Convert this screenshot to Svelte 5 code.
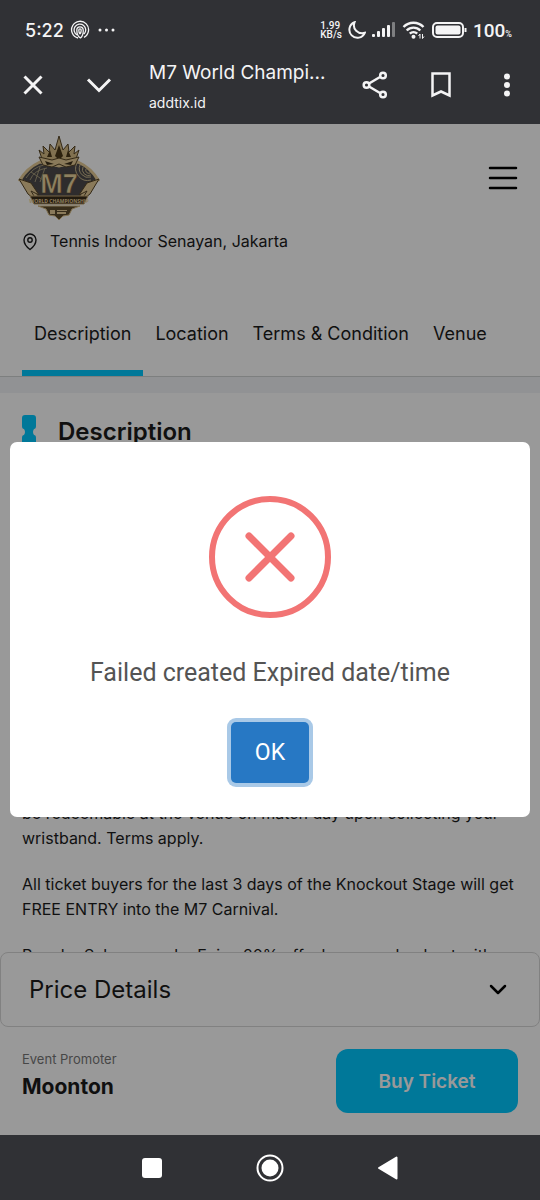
<script>
    let modalOpen = true;
    let activeTab = 'Description';

    const tabs = ['Description', 'Location', 'Terms & Condition', 'Venue'];
    const signalBars = [3, 6, 9, 12, 15];
</script>

<div class="screen">
    <header class="chrome">
        <div class="status">
            <span class="clock">5:22</span>
            <svg class="print" width="20" height="20" viewBox="0 0 20 20">
                <path d="M8 18A8.500 8.500 0 1 1 14 17.300M7.200 15A5.800 5.800 0 1 1 14 14M10.500 18c2-1.500 2.900-4.500 2.700-8a3.200 3.200 0 0 0-6.400 0c0 4 1 6.500 3.700 8M10 14c1-1.200 1.200-2 1.200-4a1.200 1.200 0 0 0-2.400 0c0 2 .2 2.800 1.200 4" />
            </svg>
            <svg class="solid" width="17" height="4" viewBox="0 0 17 4">
                <circle cx="2" cy="2" r="1.500" /><circle cx="8.500" cy="2" r="1.500" /><circle cx="15" cy="2" r="1.500" />
            </svg>
            <div class="status-right">
                <span class="speed">1.99<br>KB/s</span>
                <svg class="moon" width="18" height="18" viewBox="0 0 18 18">
                    <path d="M6.500 1.300A8 8 0 1 0 16.800 11.800C10 13.500 4 8 6.500 1.300z" />
                </svg>
                <svg class="solid" width="24" height="16" viewBox="0 0 24 16">
                    {#each signalBars as h, i}
                        <rect x={i * 5} y={15 - h} width="3" height={h} rx="1" opacity={i === 4 ? 0.4 : 1} />
                    {/each}
                </svg>
                <svg class="wifi" width="24" height="18" viewBox="0 0 24 18">
                    <path d="M1.500 6a14 14 0 0 1 20 0M4.700 9.500a9.500 9.500 0 0 1 13.600 0M7.800 12.700a5.300 5.300 0 0 1 7.400 0" />
                    <circle cx="11.500" cy="15.800" r="2" />
                    <path class="thin" d="M18 17.500v-4.500l-1.500 2M20.500 13v4.500l1.500-2" />
                </svg>
                <svg class="battery" width="35" height="16" viewBox="0 0 35 16">
                    <rect x="1" y="1" width="30" height="14" rx="4" />
                    <rect class="fill" x="3.500" y="3.500" width="25" height="9" rx="2" />
                    <path d="M33.500 6v4" />
                </svg>
                <span class="level">100<small>%</small></span>
            </div>
        </div>

        <div class="toolbar">
            <button class="icon" aria-label="Close">
                <svg width="24" height="24" viewBox="0 0 24 24"><path d="M3.500 3.500l17 17M20.500 3.500l-17 17" /></svg>
            </button>
            <button class="icon down" aria-label="Minimize">
                <svg width="26" height="24" viewBox="0 0 26 24"><path d="M2 6.500l11 11 11-11" /></svg>
            </button>
            <div class="site">
                <div class="site-title">M7 World Champi...</div>
                <div class="site-host">addtix.id</div>
            </div>
            <button class="icon share" aria-label="Share">
                <svg width="26" height="28" viewBox="0 0 26 28">
                    <path d="M7 12.500L18 6M7 15.500L18 22" />
                    <circle cx="4.500" cy="14" r="2.800" /><circle cx="21" cy="4.500" r="2.800" /><circle cx="21" cy="23.500" r="2.800" />
                </svg>
            </button>
            <button class="icon bookmark" aria-label="Bookmark">
                <svg width="22" height="26" viewBox="0 0 22 26"><path d="M2.500 1.500h17v22l-8.500-4-8.500 4z" /></svg>
            </button>
            <button class="icon more" aria-label="More options">
                <svg width="6" height="24" viewBox="0 0 6 24"><circle cx="3" cy="3.500" r="3" /><circle cx="3" cy="12" r="3" /><circle cx="3" cy="20.500" r="3" /></svg>
            </button>
        </div>
    </header>

    <main class="page">
        <div class="brand">
            <svg class="logo" width="82" height="86" viewBox="0 0 82 86">
                <path fill="#d8bd85" stroke="#574526" d="M24 24l-3-9 5 4-1-8 6 6 1-8 5 6 4-14 4 14 5-6 1 8 6-6-1 8 5-4-3 9-17 6z" />
                <path fill="#4a3818" d="M29 22l3-7 2 7zM37 21l4-11 4 11-4 4zM48 22l2-7 3 7z" />
                <path fill="#4d4a4b" stroke="#e6cc96" stroke-width="3" d="M22 27Q9 33 2 45l10 5 9 17h40l9-17 10-5Q73 33 60 27l-19 4z" />
                <path fill="none" stroke="#a59a7c" d="M8 43q7-11 18-13M12 45q4-10 17-12M17 47l5-15M22 47l5-14M13 37l12 8" />
                <path fill="none" stroke="#c9b88c" d="M59 28a12 12 0 0 0 14 17M62 30a9 9 0 0 0 11 12M65 32a6 6 0 0 0 8 8M68 34a3 3 0 0 0 4 4" />
                <path fill="#e6cc96" stroke="#574526" d="M21 22l13 3 7-2 7 2 13-3-4 8-9 2-7-3-7 3-9-2z" />
                <path fill="#3d3019" d="M27 26l9 3-7 1zM55 26l-9 3 7 1z" />
                <path fill="#e6cc96" stroke="#574526" d="M1 44l12 4 8 12-8-4 6 10-9-7zM81 44l-12 4-8 12 8-4-6 10 9-7z" />
                <text class="logo-mark" x="41" y="58" text-anchor="middle">M7</text>
                <path fill="#3a2d1a" stroke="#c3a872" d="M12 61h58l-4 8H16z" />
                <text class="logo-name" x="41" y="68" text-anchor="middle">WORLD CHAMPIONSHIP</text>
                <path fill="#5d4b2d" stroke="#d8bd85" d="M20 71h42l-8 3-3 6-6 1-4 4-4-4-6-1-3-6z" />
                <path fill="#e6cc96" d="M32 75h5v4h-5zM39 75h10v1H39zM39 77h9v2h-9z" />
            </svg>
            <button class="menu" aria-label="Menu">
                <svg width="30" height="24" viewBox="0 0 30 24"><path d="M2 2h26M2 12h26M2 22h26" /></svg>
            </button>
        </div>

        <div class="venue">
            <svg width="16" height="18" viewBox="0 0 16 18">
                <path d="M8 16.500S14 12 14 7A6 6 0 0 0 2 7c0 5 6 9.500 6 9.500z" /><circle cx="8" cy="7" r="2.200" />
            </svg>
            <span>Tennis Indoor Senayan, Jakarta</span>
        </div>

        <nav class="tabs">
            {#each tabs as tab}
                <button class="tab" class:active={activeTab === tab} on:click={() => activeTab = tab}>{tab}</button>
            {/each}
        </nav>

        <section class="details">
            <h2>
                <svg width="14" height="34" viewBox="0 0 14 34">
                    <path d="M3 0h8q3 0 3 3v8q0 3-2 3-2 3 0 6 2 0 2 3v8q0 3-3 3H3q-3 0-3-3v-8q0-3 2-3 2-3 0-6-2 0-2-3V3q0-3 3-3z" />
                </svg>
                Description
            </h2>
            <div class="copy">
                <p>be redeemable at the venue on match day upon collecting your wristband. Terms apply.</p>
                <p>All ticket buyers for the last 3 days of the Knockout Stage will get FREE ENTRY into the M7 Carnival.</p>
                <p>Regular Sale promo by Enjoy 20% off when you checkout with</p>
            </div>
        </section>

        <footer class="sheet">
            <button class="price">
                Price Details
                <svg width="18" height="12" viewBox="0 0 18 12"><path d="M2 2l7 7 7-7" /></svg>
            </button>
            <div class="buy-row">
                <div>
                    <div class="label">Event Promoter</div>
                    <div class="promoter">Moonton</div>
                </div>
                <button class="buy">Buy Ticket</button>
            </div>
        </footer>

        {#if modalOpen}
            <div class="backdrop">
                <div class="modal" role="alertdialog" aria-labelledby="modal-text">
                    <svg width="122" height="122" viewBox="0 0 122 122">
                        <circle cx="61" cy="61" r="58" /><path class="cross" d="M40 40l42 42M82 40l-42 42" />
                    </svg>
                    <p id="modal-text">Failed created Expired date/time</p>
                    <button class="ok" on:click={() => modalOpen = false}>OK</button>
                </div>
            </div>
        {/if}
    </main>

    <nav class="system-nav">
        <button aria-label="Recents"><svg width="22" height="22" viewBox="0 0 22 22"><rect x="1" y="1" width="20" height="20" rx="3" /></svg></button>
        <button aria-label="Home"><svg width="28" height="28" viewBox="0 0 28 28"><circle class="ring" cx="14" cy="14" r="12.500" /><circle cx="14" cy="14" r="8.500" /></svg></button>
        <button aria-label="Back"><svg width="22" height="24" viewBox="0 0 22 24"><path d="M19.500 1.500v21L2 12z" stroke="#fff" stroke-width="2" stroke-linejoin="round" /></svg></button>
    </nav>
</div>

<style>
    :global(body) {
        margin: 0;
    }

    .screen {
        display: flex;
        flex-direction: column;
        height: 100vh;
        font-family: Inter, "Liberation Sans", sans-serif;
        color: #1c1c1c;
        background: #303135;
    }

    button {
        margin: 0;
        padding: 0;
        border: none;
        background: none;
        font-family: inherit;
        color: inherit;
        cursor: pointer;
    }

    svg {
        display: block;
        flex: none;
    }

    .chrome {
        color: #f4f4f5;
        padding-bottom: 14px;
    }

    .chrome svg {
        fill: none;
        stroke: #f4f4f5;
        stroke-width: 3;
    }

    .chrome svg.solid,
    .chrome .more svg {
        fill: #f4f4f5;
        stroke: none;
    }

    .status {
        display: flex;
        align-items: center;
        gap: 8px;
        height: 60px;
        padding: 0 28px 0 25px;
        font-family: Roboto, sans-serif;
    }

    .clock {
        font-family: Inter, sans-serif;
        font-size: 18px;
        font-weight: 500;
    }

    .chrome .print {
        stroke-width: 1.3;
        margin-left: -2px;
    }

    .status-right {
        display: flex;
        align-items: center;
        gap: 6px;
        margin-left: auto;
    }

    .speed {
        font-size: 10px;
        line-height: 9px;
        font-weight: 500;
    }

    .chrome .moon,
    .chrome .battery {
        stroke-width: 2;
    }

    .chrome .wifi {
        stroke-width: 2.4;
    }

    .wifi circle,
    .battery .fill {
        fill: #f4f4f5;
        stroke: none;
    }

    .wifi .thin {
        stroke-width: 1;
    }

    .level {
        font-size: 19px;
        font-weight: 500;
    }

    .level small {
        font-size: 9px;
    }

    .toolbar {
        display: flex;
        align-items: center;
        height: 50px;
        padding: 0 0 0 12px;
    }

    .icon {
        display: flex;
        align-items: center;
        justify-content: center;
        width: 42px;
        height: 48px;
        margin-right: 24px;
    }

    .icon.more {
        margin-right: 12px;
    }

    .chrome .share svg,
    .chrome .bookmark svg {
        stroke-width: 2.5;
    }

    .site {
        flex: 1;
        padding: 5px 0 0 5px;
        line-height: 30px;
    }

    .site-title {
        font-size: 19px;
        white-space: nowrap;
    }

    .site-host {
        font-size: 14px;
    }

    .page {
        position: relative;
        display: flex;
        flex-direction: column;
        flex: 1;
        min-height: 0;
        overflow: hidden;
        background: #fff;
    }

    .brand {
        display: flex;
        align-items: center;
        justify-content: space-between;
        height: 103px;
        padding: 5px 22px 0 18px;
        box-sizing: border-box;
    }

    .logo-mark {
        font: bold 27px "Liberation Sans", sans-serif;
        fill: #ecd5a0;
        stroke: #574526;
        stroke-width: 0.5;
    }

    .logo-name {
        font: bold 7px "Open Sans", sans-serif;
        font-size: 5px;
        fill: #ecd5a0;
    }

    .menu svg {
        stroke: #000;
        stroke-width: 2.5;
        stroke-linecap: round;
    }

    .venue {
        display: flex;
        align-items: center;
        gap: 12px;
        padding: 2px 22px;
        font-size: 16px;
        line-height: 25px;
    }

    .venue svg {
        fill: none;
        stroke: #1c1c1c;
        stroke-width: 1.4;
    }

    .tabs {
        display: flex;
        padding: 40px 22px 0;
        border-bottom: 1px solid #d0d4d4;
    }

    .tab {
        height: 80px;
        padding: 0 12px;
        border-bottom: 6px solid transparent;
        font-size: 18px;
        white-space: nowrap;
    }

    .tab.active {
        border-bottom-color: #00c8ff;
    }

    .details {
        flex: 1;
        min-height: 0;
        overflow: hidden;
        padding: 22px 22px 0;
        border-top: 16px solid #f2f4f7;
    }

    h2 {
        display: flex;
        align-items: center;
        gap: 22px;
        margin: 0;
        font-size: 24px;
        line-height: 34px;
        font-weight: 600;
    }

    h2 svg {
        fill: #00c8ff;
    }

    .copy {
        margin-top: 352px;
        font-size: 16px;
        line-height: 25px;
    }

    .copy p {
        margin: 0 0 21px;
    }

    .sheet {
        background: #fff;
    }

    .price {
        display: flex;
        align-items: center;
        justify-content: space-between;
        width: 100%;
        height: 75px;
        padding: 0 32px 0 28px;
        border: 1px solid #d8d8d8;
        border-radius: 8px;
        font-size: 24px;
    }

    .price svg {
        fill: none;
        stroke: #000;
        stroke-width: 2.5;
        stroke-linecap: round;
        stroke-linejoin: round;
    }

    .buy-row {
        display: flex;
        align-items: flex-start;
        justify-content: space-between;
        padding: 22px;
    }

    .label {
        font-size: 13px;
        line-height: 20px;
        color: #777;
    }

    .promoter {
        font-size: 21px;
        line-height: 36px;
        font-weight: 700;
    }

    .buy {
        width: 182px;
        height: 64px;
        border-radius: 12px;
        background: #00c8ff;
        color: #fff;
        font-size: 19px;
        font-weight: 600;
    }

    .backdrop {
        position: absolute;
        inset: 0;
        display: flex;
        align-items: center;
        justify-content: center;
        padding: 10px;
        background: rgba(0, 0, 0, 0.4);
    }

    .modal {
        display: flex;
        flex-direction: column;
        align-items: center;
        width: 100%;
        padding: 54px 20px 34px;
        border-radius: 7px;
        background: #fff;
        font-family: Roboto, sans-serif;
    }

    .modal svg {
        fill: none;
        stroke: #f27474;
        stroke-width: 6;
        stroke-linecap: round;
    }

    .modal .cross {
        stroke-width: 7;
    }

    .modal p {
        margin: 38px 0 32px;
        font-size: 25px;
        line-height: 34px;
        color: #545454;
        text-align: center;
    }

    .ok {
        width: 78px;
        height: 61px;
        border-radius: 5px;
        background: #2778c4;
        box-shadow: 0 0 0 4px #a9c9e7;
        color: #fff;
        font-size: 23px;
    }

    .system-nav {
        display: flex;
        justify-content: center;
        align-items: center;
        gap: 90px;
        height: 65px;
    }

    .system-nav button {
        display: flex;
        justify-content: center;
        width: 28px;
    }

    .system-nav svg {
        fill: #fff;
    }

    .system-nav .ring {
        fill: none;
        stroke: #fff;
        stroke-width: 2;
    }
</style>
